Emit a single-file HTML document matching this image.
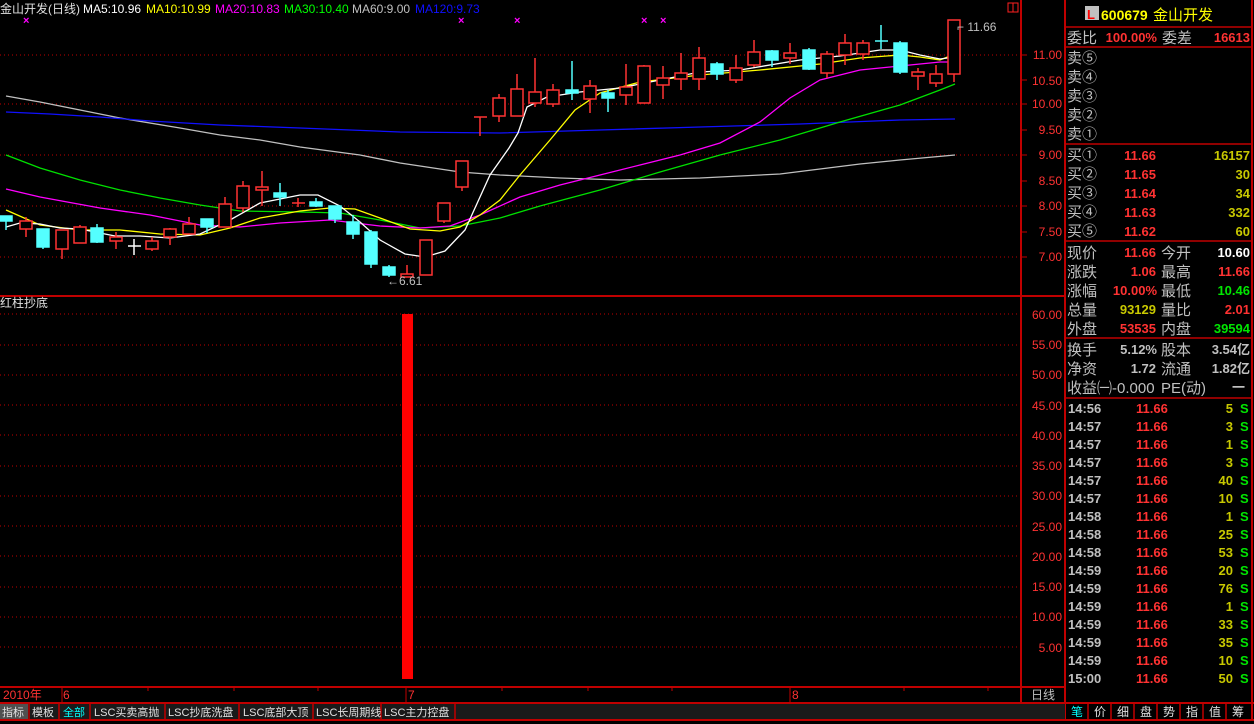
<!DOCTYPE html>
<html><head><meta charset="utf-8"><style>
html,body{margin:0;padding:0;background:#000;width:1254px;height:724px;overflow:hidden}
svg{display:block}
text{font-family:"Liberation Sans","Noto Sans CJK SC",sans-serif}
</style></head><body>
<svg width="1254" height="724" viewBox="0 0 1254 724" xmlns="http://www.w3.org/2000/svg">
<rect width="1254" height="724" fill="#000"/>
<g stroke="#c00000" stroke-width="1" stroke-dasharray="1,3">
<line x1="0" y1="55" x2="1020" y2="55"/><line x1="0" y1="104" x2="1020" y2="104"/><line x1="0" y1="155" x2="1020" y2="155"/><line x1="0" y1="206" x2="1020" y2="206"/><line x1="0" y1="257" x2="1020" y2="257"/>
<line x1="0" y1="314" x2="1020" y2="314"/><line x1="0" y1="345" x2="1020" y2="345"/><line x1="0" y1="375" x2="1020" y2="375"/><line x1="0" y1="405" x2="1020" y2="405"/><line x1="0" y1="435" x2="1020" y2="435"/><line x1="0" y1="466" x2="1020" y2="466"/><line x1="0" y1="496" x2="1020" y2="496"/><line x1="0" y1="526" x2="1020" y2="526"/><line x1="0" y1="556" x2="1020" y2="556"/><line x1="0" y1="587" x2="1020" y2="587"/><line x1="0" y1="617" x2="1020" y2="617"/><line x1="0" y1="647" x2="1020" y2="647"/>
</g>
<g stroke="#c00000" stroke-width="2" fill="none">
<line x1="1021" y1="0" x2="1021" y2="704"/>
<line x1="0" y1="296" x2="1065" y2="296"/>
<line x1="0" y1="687" x2="1065" y2="687"/>
<line x1="1065" y1="0" x2="1065" y2="720"/>
<line x1="1252" y1="0" x2="1252" y2="720"/>
<line x1="0" y1="703" x2="1254" y2="703"/>
<line x1="0" y1="720" x2="1254" y2="720"/>
</g>
<rect x="1008" y="3" width="10" height="9" fill="none" stroke="#ff2020"/><line x1="1013" y1="3" x2="1013" y2="12" stroke="#ff2020"/>
<g fill="none" stroke-width="1.3">
<polyline stroke="#c0c0c0" points="6,96 40,102 80,110 120,118 180,128 220,135 260,140 300,147 360,155 400,163 460,172 500,175 560,178 620,180 700,178 780,174 860,164 900,160 955,155"/>
<polyline stroke="#1010ff" points="6,112 50,114 100,117 150,121 220,125 300,128 400,132 500,133 600,130 700,127 800,124 900,120 955,119"/>
<polyline stroke="#00e000" points="6,155 40,168 80,180 120,190 160,198 200,205 240,211 300,212 340,213 380,220 420,228 460,226 500,218 540,206 600,190 660,172 720,155 780,140 840,122 900,105 940,90 955,84"/>
<polyline stroke="#ff00ff" points="6,189 40,197 100,208 150,215 200,225 240,227 280,223 330,220 380,226 420,228 450,226 480,215 520,197 560,185 600,175 640,165 680,155 720,143 760,122 790,98 820,80 860,70 900,66 940,62 955,62"/>
<polyline stroke="#ffff00" points="6,210 40,225 80,230 120,230 160,234 200,235 230,228 260,218 300,211 330,208 355,209 380,218 410,229 440,231 460,227 480,215 500,200 520,175 550,140 575,110 600,93 640,82 700,75 760,70 820,64 860,58 900,55 920,57 940,60 955,54"/>
<polyline stroke="#ffffff" points="6,227 20,223 40,224 60,228 80,229 100,233 115,236 140,236 170,238 200,234 230,220 260,203 300,195 318,195 340,206 360,222 380,240 405,254 425,257 445,251 465,230 490,175 509,148 518,133 527,107 547,97 580,92 620,88 660,80 700,72 740,70 800,60 840,56 880,50 900,50 920,55 940,59 955,57"/>
</g>
<g stroke-width="1.5">
<g stroke="#54ffff" fill="#54ffff">
<line x1="6" y1="216" x2="6" y2="230"/><rect x="0" y="216" width="12" height="5"/>
<line x1="43" y1="229" x2="43" y2="249"/><rect x="37" y="229" width="12" height="18"/>
<line x1="97" y1="224" x2="97" y2="243"/><rect x="91" y="228" width="12" height="14"/>
<line x1="207" y1="219" x2="207" y2="233"/><rect x="201" y="219" width="12" height="8"/>
<line x1="280" y1="183" x2="280" y2="206"/><rect x="274" y="193" width="12" height="4"/>
<line x1="316" y1="198" x2="316" y2="207"/><rect x="310" y="202" width="12" height="4"/>
<line x1="335" y1="206" x2="335" y2="223"/><rect x="329" y="206" width="12" height="13"/>
<line x1="353" y1="215" x2="353" y2="239"/><rect x="347" y="222" width="12" height="12"/>
<line x1="371" y1="230" x2="371" y2="268"/><rect x="365" y="232" width="12" height="32"/>
<line x1="389" y1="265" x2="389" y2="277"/><rect x="383" y="267" width="12" height="8"/>
<line x1="572" y1="61" x2="572" y2="100"/><rect x="566" y="90" width="12" height="3"/>
<line x1="608" y1="90" x2="608" y2="112"/><rect x="602" y="93" width="12" height="5"/>
<line x1="717" y1="62" x2="717" y2="80"/><rect x="711" y="64" width="12" height="10"/>
<line x1="772" y1="50" x2="772" y2="67"/><rect x="766" y="51" width="12" height="9"/>
<line x1="809" y1="48" x2="809" y2="70"/><rect x="803" y="50" width="12" height="19"/>
<line x1="881" y1="25" x2="881" y2="49"/><line x1="875" y1="41" x2="888" y2="41"/>
<line x1="900" y1="41" x2="900" y2="74"/><rect x="894" y="43" width="13" height="29"/>
</g>
<g stroke="#ffffff"><line x1="134" y1="239" x2="134" y2="255"/><line x1="128" y1="246" x2="141" y2="246"/></g>
<g stroke="#ff3232" fill="#000">
<line x1="26" y1="217" x2="26" y2="237"/><rect x="20" y="221" width="12" height="8"/>
<line x1="62" y1="230" x2="62" y2="259"/><rect x="56" y="230" width="12" height="19"/>
<line x1="80" y1="225" x2="80" y2="243"/><rect x="74" y="227" width="12" height="16"/>
<line x1="116" y1="232" x2="116" y2="249"/><rect x="110" y="237" width="12" height="4"/>
<line x1="152" y1="237" x2="152" y2="251"/><rect x="146" y="241" width="12" height="8"/>
<line x1="170" y1="228" x2="170" y2="245"/><rect x="164" y="229" width="12" height="8"/>
<line x1="189" y1="217" x2="189" y2="234"/><rect x="183" y="224" width="12" height="10"/>
<line x1="225" y1="197" x2="225" y2="227"/><rect x="219" y="204" width="12" height="23"/>
<line x1="243" y1="181" x2="243" y2="212"/><rect x="237" y="186" width="12" height="22"/>
<line x1="262" y1="171" x2="262" y2="206"/><rect x="256" y="187" width="12" height="3"/>
<line x1="298" y1="198" x2="298" y2="207"/><line x1="292" y1="203" x2="305" y2="203"/>
<line x1="407" y1="265" x2="407" y2="277"/><rect x="401" y="274" width="12" height="3"/>
<rect x="420" y="240" width="12" height="35"/>
<line x1="444" y1="203" x2="444" y2="223"/><rect x="438" y="203" width="12" height="18"/>
<line x1="462" y1="161" x2="462" y2="191"/><rect x="456" y="161" width="12" height="26"/>
<line x1="480" y1="117" x2="480" y2="136"/><line x1="474" y1="117" x2="487" y2="117"/>
<line x1="499" y1="94" x2="499" y2="122"/><rect x="493" y="98" width="12" height="18"/>
<line x1="517" y1="74" x2="517" y2="116"/><rect x="511" y="89" width="12" height="27"/>
<line x1="535" y1="58" x2="535" y2="107"/><rect x="529" y="92" width="12" height="11"/>
<line x1="553" y1="84" x2="553" y2="107"/><rect x="547" y="90" width="12" height="14"/>
<line x1="590" y1="80" x2="590" y2="113"/><rect x="584" y="86" width="12" height="13"/>
<line x1="626" y1="64" x2="626" y2="105"/><rect x="620" y="87" width="12" height="8"/>
<line x1="644" y1="65" x2="644" y2="103"/><rect x="638" y="66" width="12" height="37"/>
<line x1="663" y1="66" x2="663" y2="99"/><rect x="657" y="78" width="12" height="7"/>
<line x1="681" y1="53" x2="681" y2="90"/><rect x="675" y="73" width="12" height="6"/>
<line x1="699" y1="47" x2="699" y2="90"/><rect x="693" y="58" width="12" height="21"/>
<line x1="736" y1="55" x2="736" y2="83"/><rect x="730" y="68" width="12" height="12"/>
<line x1="754" y1="40" x2="754" y2="67"/><rect x="748" y="52" width="12" height="13"/>
<line x1="790" y1="43" x2="790" y2="64"/><rect x="784" y="53" width="12" height="5"/>
<line x1="827" y1="51" x2="827" y2="78"/><rect x="821" y="54" width="12" height="19"/>
<line x1="845" y1="34" x2="845" y2="65"/><rect x="839" y="43" width="12" height="12"/>
<line x1="863" y1="40" x2="863" y2="60"/><rect x="857" y="43" width="12" height="11"/>
<line x1="918" y1="68" x2="918" y2="90"/><rect x="912" y="72" width="12" height="4"/>
<line x1="936" y1="65" x2="936" y2="87"/><rect x="930" y="74" width="12" height="9"/>
<line x1="954" y1="20" x2="954" y2="82"/><rect x="948" y="20" width="12" height="54"/>
</g>
</g>
<g fill="#ff00ff" font-size="11" font-weight="bold"><text x="23" y="24">×</text><text x="458" y="24">×</text><text x="514" y="24">×</text><text x="641" y="24">×</text><text x="660" y="24">×</text></g>
<text x="387" y="285" fill="#c0c0c0" font-size="12">←6.61</text>
<text x="957" y="31" fill="#c0c0c0" font-size="12">⌐ 11.66</text>
<g font-size="12">
<text x="0" y="13" fill="#e0e0e0">金山开发(日线)</text>
<text x="83" y="13" fill="#ffffff">MA5:10.96</text>
<text x="146" y="13" fill="#ffff00">MA10:10.99</text>
<text x="215" y="13" fill="#ff00ff">MA20:10.83</text>
<text x="284" y="13" fill="#00ff00">MA30:10.40</text>
<text x="352" y="13" fill="#c0c0c0">MA60:9.00</text>
<text x="415" y="13" fill="#1010ff">MA120:9.73</text>
<text x="0" y="307" fill="#e0e0e0">红柱抄底</text>
</g>
<rect x="402" y="314" width="11" height="365" fill="#ff0000"/>
<g fill="#ff3232" font-size="12" text-anchor="end">
<text x="1062" y="59">11.00</text><text x="1062" y="85">10.50</text><text x="1062" y="108">10.00</text><text x="1062" y="134">9.50</text><text x="1062" y="159">9.00</text><text x="1062" y="185">8.50</text><text x="1062" y="210">8.00</text><text x="1062" y="236">7.50</text><text x="1062" y="261">7.00</text>
<text x="1062" y="319">60.00</text><text x="1062" y="349">55.00</text><text x="1062" y="379">50.00</text><text x="1062" y="410">45.00</text><text x="1062" y="440">40.00</text><text x="1062" y="470">35.00</text><text x="1062" y="500">30.00</text><text x="1062" y="531">25.00</text><text x="1062" y="561">20.00</text><text x="1062" y="591">15.00</text><text x="1062" y="621">10.00</text><text x="1062" y="652">5.00</text>
</g>
<g stroke="#c00000"><line x1="1021" y1="55" x2="1027" y2="55"/><line x1="1021" y1="80" x2="1027" y2="80"/><line x1="1021" y1="104" x2="1027" y2="104"/><line x1="1021" y1="130" x2="1027" y2="130"/><line x1="1021" y1="155" x2="1027" y2="155"/><line x1="1021" y1="181" x2="1027" y2="181"/><line x1="1021" y1="206" x2="1027" y2="206"/><line x1="1021" y1="232" x2="1027" y2="232"/><line x1="1021" y1="257" x2="1027" y2="257"/>
<line x1="62" y1="687" x2="62" y2="703"/><line x1="406" y1="687" x2="406" y2="703"/><line x1="790" y1="687" x2="790" y2="703"/>
<line x1="148" y1="687" x2="148" y2="691"/><line x1="234" y1="687" x2="234" y2="691"/><line x1="318" y1="687" x2="318" y2="691"/><line x1="502" y1="687" x2="502" y2="691"/><line x1="588" y1="687" x2="588" y2="691"/><line x1="672" y1="687" x2="672" y2="691"/><line x1="904" y1="687" x2="904" y2="691"/><line x1="988" y1="687" x2="988" y2="691"/></g>
<g fill="#ff3232" font-size="12"><text x="3" y="699">2010年</text><text x="63" y="699">6</text><text x="408" y="699">7</text><text x="792" y="699">8</text></g>
<text x="1031" y="699" fill="#c0c0c0" font-size="12">日线</text>
<rect x="0" y="704" width="1065" height="15" fill="#1a1a1a"/>
<rect x="0" y="704" width="28" height="15" fill="#505050"/>
<g stroke="#c00000" stroke-width="1.5"><line x1="29" y1="703" x2="29" y2="720"/><line x1="59" y1="703" x2="59" y2="720"/><line x1="90" y1="703" x2="90" y2="720"/><line x1="165" y1="703" x2="165" y2="720"/><line x1="239" y1="703" x2="239" y2="720"/><line x1="313" y1="703" x2="313" y2="720"/><line x1="381" y1="703" x2="381" y2="720"/><line x1="455" y1="703" x2="455" y2="720"/>
<line x1="1088" y1="703" x2="1088" y2="720"/><line x1="1111" y1="703" x2="1111" y2="720"/><line x1="1134" y1="703" x2="1134" y2="720"/><line x1="1157" y1="703" x2="1157" y2="720"/><line x1="1180" y1="703" x2="1180" y2="720"/><line x1="1203" y1="703" x2="1203" y2="720"/><line x1="1226" y1="703" x2="1226" y2="720"/></g>
<g font-size="11" fill="#e0e0e0"><text x="2" y="716">指标</text><text x="32" y="716">模板</text><text x="63" y="716" fill="#00ffff">全部</text><text x="94" y="716">LSC买卖高抛</text><text x="168" y="716">LSC抄底洗盘</text><text x="243" y="716">LSC底部大顶</text><text x="316" y="716">LSC长周期线</text><text x="384" y="716">LSC主力控盘</text>
<text x="1071" y="716" fill="#00ffff" font-size="12">笔</text><text x="1094" y="716" font-size="12">价</text><text x="1117" y="716" font-size="12">细</text><text x="1140" y="716" font-size="12">盘</text><text x="1163" y="716" font-size="12">势</text><text x="1186" y="716" font-size="12">指</text><text x="1209" y="716" font-size="12">值</text><text x="1232" y="716" font-size="12">筹</text></g>
<g stroke="#c00000" stroke-width="1.5"><line x1="1065" y1="27" x2="1252" y2="27"/><line x1="1065" y1="47" x2="1252" y2="47"/><line x1="1065" y1="144" x2="1252" y2="144"/><line x1="1065" y1="241" x2="1252" y2="241"/><line x1="1065" y1="338" x2="1252" y2="338"/><line x1="1065" y1="398" x2="1252" y2="398"/></g>
<rect x="1085" y="6" width="14" height="14" fill="#c0c0c0"/><text x="1087" y="19" fill="#ff0000" font-size="13" font-weight="bold" font-family="Liberation Serif">L</text>
<text x="1101" y="20" fill="#ffff00" font-size="14" font-weight="bold">600679</text><text x="1153" y="20" fill="#ffff00" font-size="15">金山开发</text>
<g font-size="15" fill="#c0c0c0">
<text x="1067" y="43">委比</text><text x="1162" y="43">委差</text>
<text x="1067" y="63">卖⑤</text><text x="1067" y="82">卖④</text><text x="1067" y="101">卖③</text><text x="1067" y="120">卖②</text><text x="1067" y="139">卖①</text>
<text x="1067" y="160">买①</text><text x="1067" y="179">买②</text><text x="1067" y="198">买③</text><text x="1067" y="217">买④</text><text x="1067" y="236">买⑤</text>
<text x="1067" y="258">现价</text><text x="1067" y="277">涨跌</text><text x="1067" y="296">涨幅</text><text x="1067" y="315">总量</text><text x="1067" y="334">外盘</text>
<text x="1161" y="258">今开</text><text x="1161" y="277">最高</text><text x="1161" y="296">最低</text><text x="1161" y="315">量比</text><text x="1161" y="334">内盘</text>
<text x="1067" y="355">换手</text><text x="1067" y="374">净资</text><text x="1067" y="393">收益㈠-0.000</text>
<text x="1161" y="355">股本</text><text x="1161" y="374">流通</text><text x="1161" y="393">PE(动)</text>
</g>
<g font-size="13" font-weight="bold" text-anchor="end">
<text x="1157" y="42" fill="#ff3232">100.00%</text><text x="1250" y="42" fill="#ff3232">16613</text>
<text x="1156" y="160" fill="#ff3232">11.66</text><text x="1156" y="179" fill="#ff3232">11.65</text><text x="1156" y="198" fill="#ff3232">11.64</text><text x="1156" y="217" fill="#ff3232">11.63</text><text x="1156" y="236" fill="#ff3232">11.62</text>
<text x="1250" y="160" fill="#c8c800">16157</text><text x="1250" y="179" fill="#c8c800">30</text><text x="1250" y="198" fill="#c8c800">34</text><text x="1250" y="217" fill="#c8c800">332</text><text x="1250" y="236" fill="#c8c800">60</text>
<text x="1156" y="257" fill="#ff3232">11.66</text><text x="1156" y="276" fill="#ff3232">1.06</text><text x="1157" y="295" fill="#ff3232">10.00%</text><text x="1156" y="314" fill="#c8c800">93129</text><text x="1156" y="333" fill="#ff3232">53535</text>
<text x="1250" y="257" fill="#ffffff">10.60</text><text x="1250" y="276" fill="#ff3232">11.66</text><text x="1250" y="295" fill="#00e600">10.46</text><text x="1250" y="314" fill="#ff3232">2.01</text><text x="1250" y="333" fill="#00e600">39594</text>
<text x="1157" y="354" fill="#c0c0c0">5.12%</text><text x="1156" y="373" fill="#c0c0c0">1.72</text>
<text x="1250" y="354" fill="#c0c0c0">3.54亿</text><text x="1250" y="373" fill="#c0c0c0">1.82亿</text><text x="1245" y="392" fill="#c0c0c0">一</text>
</g>
<g font-size="13" font-weight="bold">
<g fill="#c0c0c0"><text x="1068" y="413">14:56</text><text x="1068" y="431">14:57</text><text x="1068" y="449">14:57</text><text x="1068" y="467">14:57</text><text x="1068" y="485">14:57</text><text x="1068" y="503">14:57</text><text x="1068" y="521">14:58</text><text x="1068" y="539">14:58</text><text x="1068" y="557">14:58</text><text x="1068" y="575">14:59</text><text x="1068" y="593">14:59</text><text x="1068" y="611">14:59</text><text x="1068" y="629">14:59</text><text x="1068" y="647">14:59</text><text x="1068" y="665">14:59</text><text x="1068" y="683">15:00</text></g>
<g fill="#ff3232"><text x="1136" y="413">11.66</text><text x="1136" y="431">11.66</text><text x="1136" y="449">11.66</text><text x="1136" y="467">11.66</text><text x="1136" y="485">11.66</text><text x="1136" y="503">11.66</text><text x="1136" y="521">11.66</text><text x="1136" y="539">11.66</text><text x="1136" y="557">11.66</text><text x="1136" y="575">11.66</text><text x="1136" y="593">11.66</text><text x="1136" y="611">11.66</text><text x="1136" y="629">11.66</text><text x="1136" y="647">11.66</text><text x="1136" y="665">11.66</text><text x="1136" y="683">11.66</text></g>
<g fill="#c8c800" text-anchor="end"><text x="1233" y="413">5</text><text x="1233" y="431">3</text><text x="1233" y="449">1</text><text x="1233" y="467">3</text><text x="1233" y="485">40</text><text x="1233" y="503">10</text><text x="1233" y="521">1</text><text x="1233" y="539">25</text><text x="1233" y="557">53</text><text x="1233" y="575">20</text><text x="1233" y="593">76</text><text x="1233" y="611">1</text><text x="1233" y="629">33</text><text x="1233" y="647">35</text><text x="1233" y="665">10</text><text x="1233" y="683">50</text></g>
<g fill="#00e600"><text x="1240" y="413">S</text><text x="1240" y="431">S</text><text x="1240" y="449">S</text><text x="1240" y="467">S</text><text x="1240" y="485">S</text><text x="1240" y="503">S</text><text x="1240" y="521">S</text><text x="1240" y="539">S</text><text x="1240" y="557">S</text><text x="1240" y="575">S</text><text x="1240" y="593">S</text><text x="1240" y="611">S</text><text x="1240" y="629">S</text><text x="1240" y="647">S</text><text x="1240" y="665">S</text><text x="1240" y="683">S</text></g>
</g>
</svg>
</body></html>
